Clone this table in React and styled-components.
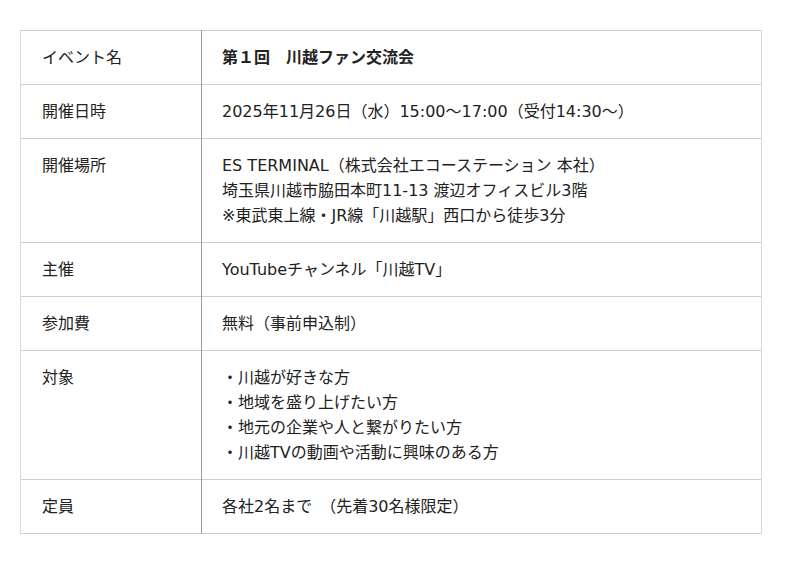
import React from "react";
import styled, { createGlobalStyle } from "styled-components";

const Global = createGlobalStyle`
  html, body { margin: 0; padding: 0; background: #fff; }
  body { font-family: "DejaVu Sans", "Noto Sans CJK JP", sans-serif; color: #222; }
`;

const Page = styled.div`
  padding: 30px 39px 30px 20px;
`;

const Table = styled.table`
  width: 742px;
  border-collapse: collapse;
  font-size: 16px;
  line-height: 25px;
`;

const Row = styled.tr`
  border-top: 1px solid #cfcfcf;
  border-bottom: 1px solid #cfcfcf;
`;

const Head = styled.th`
  width: 138px;
  text-align: left;
  font-weight: normal;
  vertical-align: top;
  padding: 14px 21px 14px 21px;
  border-left: 1px solid #d8d8d8;
  border-right: 1px solid #9a9a9a;
`;

const Cell = styled.td`
  vertical-align: top;
  padding: 14px 21px 14px 20px;
  border-right: 1px solid #d8d8d8;
  font-weight: ${(p) => (p.$bold ? "bold" : "normal")};
`;

const Line = styled.div``;

const rows = [
  { h: "イベント名", bold: true, lines: ["第１回　川越ファン交流会"] },
  { h: "開催日時", lines: ["2025年11月26日（水）15:00〜17:00（受付14:30〜）"] },
  {
    h: "開催場所",
    lines: [
      "ES TERMINAL（株式会社エコーステーション 本社）",
      "埼玉県川越市脇田本町11-13 渡辺オフィスビル3階",
      "※東武東上線・JR線「川越駅」西口から徒歩3分",
    ],
  },
  { h: "主催", lines: ["YouTubeチャンネル「川越TV」"] },
  { h: "参加費", lines: ["無料（事前申込制）"] },
  {
    h: "対象",
    lines: [
      "・川越が好きな方",
      "・地域を盛り上げたい方",
      "・地元の企業や人と繋がりたい方",
      "・川越TVの動画や活動に興味のある方",
    ],
  },
  { h: "定員", lines: ["各社2名まで　（先着30名様限定）"] },
];

export default function App() {
  return (
    <Page>
      <Global />
      <Table>
        <tbody>
          {rows.map((r) => (
            <Row key={r.h}>
              <Head>{r.h}</Head>
              <Cell $bold={r.bold}>
                {r.lines.map((l) => (
                  <Line key={l}>{l}</Line>
                ))}
              </Cell>
            </Row>
          ))}
        </tbody>
      </Table>
    </Page>
  );
}
